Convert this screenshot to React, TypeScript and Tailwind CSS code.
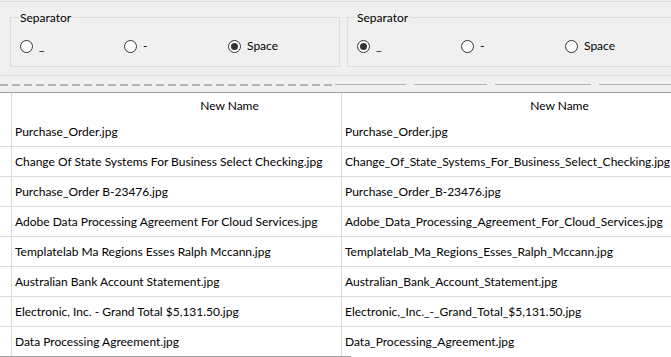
import React from 'react';

const files: [string, string][] = [
  ['Purchase_Order.jpg', 'Purchase_Order.jpg'],
  ['Change Of State Systems For Business Select Checking.jpg', 'Change_Of_State_Systems_For_Business_Select_Checking.jpg'],
  ['Purchase_Order B-23476.jpg', 'Purchase_Order_B-23476.jpg'],
  ['Adobe Data Processing Agreement For Cloud Services.jpg', 'Adobe_Data_Processing_Agreement_For_Cloud_Services.jpg'],
  ['Templatelab Ma Regions Esses Ralph Mccann.jpg', 'Templatelab_Ma_Regions_Esses_Ralph_Mccann.jpg'],
  ['Australian Bank Account Statement.jpg', 'Australian_Bank_Account_Statement.jpg'],
  ['Electronic, Inc. - Grand Total $5,131.50.jpg', 'Electronic,_Inc._-_Grand_Total_$5,131.50.jpg'],
  ['Data Processing Agreement.jpg', 'Data_Processing_Agreement.jpg'],
];

function Radio({ label, checked }: { label: string; checked?: boolean }) {
  return (
    <label className="flex w-[104px] items-center gap-[6px]">
      <span className="flex h-[13px] w-[13px] items-center justify-center rounded-full border border-[#333] bg-white">
        {checked && <span className="h-[7px] w-[7px] rounded-full bg-[#333]" />}
      </span>
      <span>{label}</span>
    </label>
  );
}

function SeparatorBox({ selected }: { selected: number }) {
  const opts = ['_', '-', 'Space'];
  return (
    <fieldset className="mt-[8px] h-[57px] w-[325px] border border-[#dcdcdc] px-[7px]">
      <legend className="px-[2px] leading-[15px]">Separator</legend>
      <div className="flex pl-[2px] pt-[12px]">
        {opts.map((o, i) => (
          <Radio key={o} label={o} checked={i === selected} />
        ))}
      </div>
    </fieldset>
  );
}

export default function App() {
  return (
    <div className="h-[357px] w-[671px] overflow-hidden bg-[#f0f0f0] font-['Lato',sans-serif] text-[12px] text-black">
      <div className="flex h-[2px]">
        <div className="w-[341px] border-b border-[#dcdcdc]" />
        <div className="w-px bg-[#dcdcdc]" />
        <div className="flex-1 border-b border-[#dcdcdc]" />
      </div>

      <div className="flex h-[74px] border-b border-[#dcdcdc] pl-[10px]">
        <SeparatorBox selected={2} />
        <div className="ml-[7px]">
          <SeparatorBox selected={0} />
        </div>
      </div>

      <div className="flex h-[16px] items-start pt-[8px]">
        <div className="h-[2px] w-[335px] bg-[repeating-linear-gradient(90deg,#b4b4b4_0_8px,transparent_8px_12px)]" />
        <div className="h-px w-[71px] bg-[#b4b4b4]" />
        <div className="ml-[8px] h-px w-[73px] bg-[#b4b4b4]" />
        <div className="ml-[8px] h-px w-[96px] bg-[#b4b4b4]" />
        <div className="ml-[8px] h-px flex-1 bg-[#b4b4b4]" />
      </div>

      <div className="border-t border-[#a0a0a0] bg-white">
        <div className="flex h-[24px]">
          <div className="w-[12px] border-r border-[#dadada]" />
          <div className="w-[329px] overflow-hidden">
            <div className="w-[435px] pt-[4px] text-center">New Name</div>
          </div>
          <div className="flex-1 overflow-hidden border-l border-[#dadada]">
            <div className="w-[435px] pt-[4px] text-center">New Name</div>
          </div>
        </div>
        {files.map(([oldName, newName], i) => {
          const last = i === files.length - 1;
          return (
            <div
              key={i}
              className={last ? 'flex h-[29px]' : 'flex h-[30px] border-b border-[#dadada]'}
            >
              <div className="w-[12px] border-r border-[#dadada]" />
              <div className="flex w-[329px] items-center overflow-hidden whitespace-nowrap pl-[3px]">
                {oldName}
              </div>
              <div className="flex flex-1 items-center overflow-hidden whitespace-nowrap border-l border-[#dadada] pl-[3px]">
                {newName}
              </div>
            </div>
          );
        })}
        <div className="h-px w-[351px] bg-[#a0a0a0]" />
      </div>
    </div>
  );
}
